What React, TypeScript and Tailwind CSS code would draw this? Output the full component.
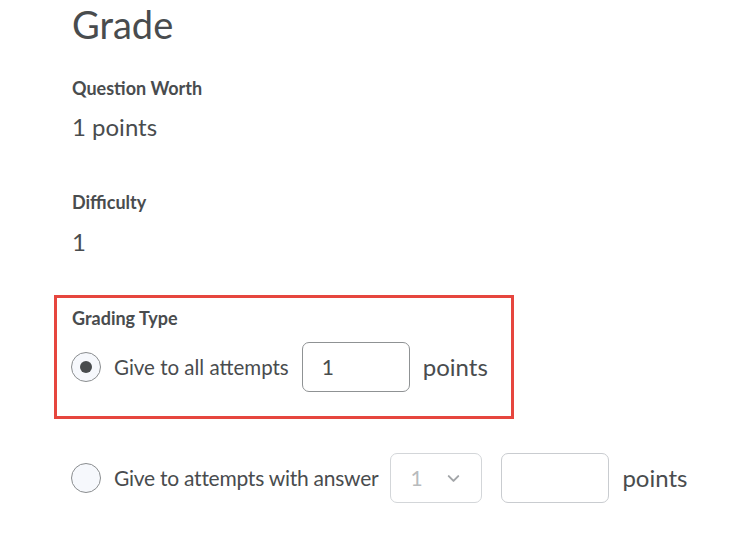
import { ChevronDown } from 'lucide-react';

function Radio({ checked }: { checked?: boolean }) {
  return (
    <span className="flex h-[30px] w-[30px] shrink-0 items-center justify-center rounded-full border border-[#8a8d8f] bg-[#f6f8fc]">
      {checked && <span className="h-[12px] w-[12px] rounded-full bg-[#494c4e]" />}
    </span>
  );
}

export default function App() {
  return (
    <div className="min-h-screen bg-white pl-[54px] font-['Lato',sans-serif] text-[#494c4e]">
      <div className="pl-[18px]">
        <h1 className="pt-[1px] text-[38px] leading-[46px] font-normal">Grade</h1>

        <div className="mt-[29px] text-[18px] leading-[24px] font-bold">Question Worth</div>
        <div className="mt-[11px] text-[24px] leading-[32px]">1 points</div>

        <div className="mt-[47px] text-[18px] leading-[24px] font-bold">Difficulty</div>
        <div className="mt-[12px] text-[24px] leading-[32px]">1</div>
      </div>

      <div className="mt-[37px] w-[460px] border-[3px] border-[#e6463e] pt-[8px] pb-[24px] pl-[15px]">
        <div className="text-[18px] leading-[24px] font-bold">Grading Type</div>
        <div className="mt-[12px] flex h-[50px] items-center">
          <span className="-ml-[1px]">
            <Radio checked />
          </span>
          <span className="ml-[13px] text-[20.5px] leading-[28px]">Give to all attempts</span>
          <div className="ml-[13px] flex h-[50px] w-[108px] items-center rounded-[7px] border border-[#8f9294] bg-white pl-[19px] text-[21px]">
            1
          </div>
          <span className="ml-[13px] text-[24px] leading-[32px]">points</span>
        </div>
      </div>

      <div className="mt-[34px] flex h-[50px] items-center pl-[17px]">
        <Radio />
        <span className="ml-[13px] text-[21px] leading-[28px] tracking-[-0.25px]">Give to attempts with answer</span>
        <div className="ml-[12px] flex h-[50px] w-[92px] items-center rounded-[7px] border border-[#d3d6d9] bg-white pl-[19px] text-[21px] text-[#b8bbbd]">
          <span>1</span>
          <ChevronDown className="ml-[21px] h-[19px] w-[19px] text-[#a2a5a8]" strokeWidth={2.5} />
        </div>
        <div className="ml-[19px] h-[50px] w-[108px] rounded-[7px] border border-[#c9ccd0] bg-white" />
        <span className="ml-[13px] text-[24px] leading-[32px]">points</span>
      </div>
    </div>
  );
}
